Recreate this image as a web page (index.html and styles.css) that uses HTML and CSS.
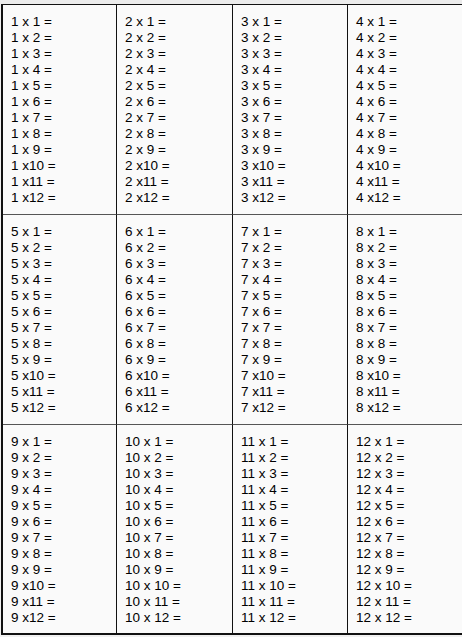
FILE: index.html
```html
<!DOCTYPE html>
<html>
<head>
<meta charset="utf-8">
<link rel="stylesheet" href="styles.css">
</head>
<body>
<div class="topstrip"></div>
<div class="table">
<div class="cell"><div>1 x 1 =</div><div>1 x 2 =</div><div>1 x 3 =</div><div>1 x 4 =</div><div>1 x 5 =</div><div>1 x 6 =</div><div>1 x 7 =</div><div>1 x 8 =</div><div>1 x 9 =</div><div>1 x10 =</div><div>1 x11 =</div><div>1 x12 =</div></div>
<div class="cell"><div>2 x 1 =</div><div>2 x 2 =</div><div>2 x 3 =</div><div>2 x 4 =</div><div>2 x 5 =</div><div>2 x 6 =</div><div>2 x 7 =</div><div>2 x 8 =</div><div>2 x 9 =</div><div>2 x10 =</div><div>2 x11 =</div><div>2 x12 =</div></div>
<div class="cell"><div>3 x 1 =</div><div>3 x 2 =</div><div>3 x 3 =</div><div>3 x 4 =</div><div>3 x 5 =</div><div>3 x 6 =</div><div>3 x 7 =</div><div>3 x 8 =</div><div>3 x 9 =</div><div>3 x10 =</div><div>3 x11 =</div><div>3 x12 =</div></div>
<div class="cell"><div>4 x 1 =</div><div>4 x 2 =</div><div>4 x 3 =</div><div>4 x 4 =</div><div>4 x 5 =</div><div>4 x 6 =</div><div>4 x 7 =</div><div>4 x 8 =</div><div>4 x 9 =</div><div>4 x10 =</div><div>4 x11 =</div><div>4 x12 =</div></div>
<div class="cell"><div>5 x 1 =</div><div>5 x 2 =</div><div>5 x 3 =</div><div>5 x 4 =</div><div>5 x 5 =</div><div>5 x 6 =</div><div>5 x 7 =</div><div>5 x 8 =</div><div>5 x 9 =</div><div>5 x10 =</div><div>5 x11 =</div><div>5 x12 =</div></div>
<div class="cell"><div>6 x 1 =</div><div>6 x 2 =</div><div>6 x 3 =</div><div>6 x 4 =</div><div>6 x 5 =</div><div>6 x 6 =</div><div>6 x 7 =</div><div>6 x 8 =</div><div>6 x 9 =</div><div>6 x10 =</div><div>6 x11 =</div><div>6 x12 =</div></div>
<div class="cell"><div>7 x 1 =</div><div>7 x 2 =</div><div>7 x 3 =</div><div>7 x 4 =</div><div>7 x 5 =</div><div>7 x 6 =</div><div>7 x 7 =</div><div>7 x 8 =</div><div>7 x 9 =</div><div>7 x10 =</div><div>7 x11 =</div><div>7 x12 =</div></div>
<div class="cell"><div>8 x 1 =</div><div>8 x 2 =</div><div>8 x 3 =</div><div>8 x 4 =</div><div>8 x 5 =</div><div>8 x 6 =</div><div>8 x 7 =</div><div>8 x 8 =</div><div>8 x 9 =</div><div>8 x10 =</div><div>8 x11 =</div><div>8 x12 =</div></div>
<div class="cell"><div>9 x 1 =</div><div>9 x 2 =</div><div>9 x 3 =</div><div>9 x 4 =</div><div>9 x 5 =</div><div>9 x 6 =</div><div>9 x 7 =</div><div>9 x 8 =</div><div>9 x 9 =</div><div>9 x10 =</div><div>9 x11 =</div><div>9 x12 =</div></div>
<div class="cell"><div>10 x 1 =</div><div>10 x 2 =</div><div>10 x 3 =</div><div>10 x 4 =</div><div>10 x 5 =</div><div>10 x 6 =</div><div>10 x 7 =</div><div>10 x 8 =</div><div>10 x 9 =</div><div>10 x 10 =</div><div>10 x 11 =</div><div>10 x 12 =</div></div>
<div class="cell"><div>11 x 1 =</div><div>11 x 2 =</div><div>11 x 3 =</div><div>11 x 4 =</div><div>11 x 5 =</div><div>11 x 6 =</div><div>11 x 7 =</div><div>11 x 8 =</div><div>11 x 9 =</div><div>11 x 10 =</div><div>11 x 11 =</div><div>11 x 12 =</div></div>
<div class="cell"><div>12 x 1 =</div><div>12 x 2 =</div><div>12 x 3 =</div><div>12 x 4 =</div><div>12 x 5 =</div><div>12 x 6 =</div><div>12 x 7 =</div><div>12 x 8 =</div><div>12 x 9 =</div><div>12 x 10 =</div><div>12 x 11 =</div><div>12 x 12 =</div></div>
</div>
</body>
</html>
```
FILE: styles.css
```css
html, body {
  margin: 0;
  padding: 0;
  background: #f0f0f0;
}
body {
  font-family: "Liberation Sans", Arial, sans-serif;
  font-size: 13.5px;
  line-height: 16px;
  color: #000;
  width: 462px;
  height: 637px;
  overflow: hidden;
}
.topstrip {
  height: 4px;
  background: #ececec;
}
.table {
  display: grid;
  grid-template-columns: 114px 116px 115px 130px;
  margin-left: 1px;
  border-top: 1px solid #111;
  border-left: 2px solid #111;
  border-bottom: 2px solid #111;
  background: #fafafa;
  width: 480px;
}
.cell {
  padding: 9px 0 8px 8px;
  border-right: 1px solid #111;
  border-bottom: 1px solid #555;
}
.cell:nth-child(n+9) {
  border-bottom: none;
  padding-bottom: 7px;
}
```
